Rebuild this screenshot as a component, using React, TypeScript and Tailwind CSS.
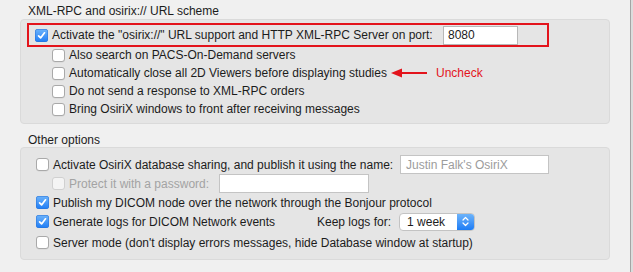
import React from "react";

const Check = ({
  checked = false,
  disabled = false,
}: {
  checked?: boolean;
  disabled?: boolean;
}) =>
  checked ? (
    <span className="flex h-[13px] w-[13px] shrink-0 items-center justify-center rounded-[3px] bg-gradient-to-b from-[#6cb3fa] to-[#1a7cf5] shadow-[inset_0_0_0_0.5px_#2a73d6]">
      <svg width="9" height="9" viewBox="0 0 9 9" fill="none">
        <path
          d="M1.6 4.8 L3.6 6.9 L7.5 1.8"
          stroke="white"
          strokeWidth="1.7"
          strokeLinecap="round"
          strokeLinejoin="round"
        />
      </svg>
    </span>
  ) : (
    <span
      className={
        disabled
          ? "h-[13px] w-[13px] shrink-0 rounded-[3px] border border-[#d0d0d0] bg-[#f4f4f4]"
          : "h-[13px] w-[13px] shrink-0 rounded-[3px] border border-[#a9a9a9] bg-white shadow-[0_0.5px_0.5px_rgba(0,0,0,0.08)]"
      }
    />
  );

const Row = ({
  indent = false,
  checked = false,
  disabled = false,
  children,
  className = "",
}: {
  indent?: boolean;
  checked?: boolean;
  disabled?: boolean;
  children: React.ReactNode;
  className?: string;
}) => (
  <div
    className={`flex shrink-0 items-center ${indent ? "pl-[31px]" : "pl-[15px]"} ${className}`}
  >
    <Check checked={checked} disabled={disabled} />
    <span
      className={`ml-[4px] whitespace-nowrap ${disabled ? "text-[#a3a3a3]" : ""}`}
    >
      {children}
    </span>
  </div>
);

export default function App() {
  return (
    <div className="flex h-[272px] w-[633px] overflow-hidden font-['Liberation_Sans',Arial,sans-serif] text-[12px] leading-[16px] text-[#1c1c1c]">
      <div className="flex w-[630px] flex-col bg-[#f0f0f0] px-[20px]">
        <div className="mt-[4px] h-[15px] pl-[8px] leading-[15px]">
          XML-RPC and osirix:// URL scheme
        </div>
        <div className="flex h-[105px] flex-col rounded-[4px] border border-[#dadada] bg-[#e5e5e5] pt-[3px]">
          <div className="ml-[6px] flex h-[24px] w-[522px] items-center border-2 border-[#e3141c] pl-[6px]">
            <Check checked />
            <span className="ml-[4px] whitespace-nowrap">
              Activate the "osirix://" URL support and HTTP XML-RPC Server on
              port:
            </span>
            <div className="ml-auto mr-[29px] flex h-[19px] w-[75px] items-center border border-[#b8b8b8] bg-white pl-[4px]">
              8080
            </div>
          </div>
          <div className="flex flex-col gap-[2px]">
            <Row indent className="h-[16px]">
              Also search on PACS-On-Demand servers
            </Row>
            <div className="flex h-[16px] items-center">
              <Row indent className="w-[370px]">
                Automatically close all 2D Viewers before displaying studies
              </Row>
              <svg width="38" height="10" viewBox="0 0 38 10">
                <path d="M0 5 L11 0.5 L11 9.5 Z" fill="#e3141c" />
                <rect x="10" y="4" width="26" height="2" fill="#e3141c" />
              </svg>
              <span className="ml-[7px] text-[#e3141c]">Uncheck</span>
            </div>
            <Row indent className="h-[16px]">
              Do not send a response to XML-RPC orders
            </Row>
            <Row indent className="h-[16px]">
              Bring OsiriX windows to front after receiving messages
            </Row>
          </div>
        </div>
        <div className="mt-[9px] h-[14px] pl-[8px] leading-[14px]">
          Other options
        </div>
        <div className="flex h-[113px] flex-col rounded-[4px] border border-[#dadada] bg-[#e5e5e5] pt-[7px]">
          <div className="flex h-[19px] items-center">
            <Row>Activate OsiriX database sharing, and publish it using the name:</Row>
            <div className="ml-auto mr-[60px] flex h-[19px] w-[149px] items-center border border-[#c4c4c4] bg-white pl-[5px] text-[#9c9c9c]">
              Justin Falk's OsiriX
            </div>
          </div>
          <div className="flex h-[19px] items-center">
            <Row indent disabled className="w-[198px]">
              Protect it with a password:
            </Row>
            <div className="h-[19px] w-[150px] border border-[#c4c4c4] bg-white" />
          </div>
          <Row checked className="h-[19px]">
            Publish my DICOM node over the network through the Bonjour protocol
          </Row>
          <div className="flex h-[19px] items-center">
            <Row checked className="w-[296px]">
              Generate logs for DICOM Network events
            </Row>
            <span className="whitespace-nowrap">Keep logs for:</span>
            <div className="ml-[8px] flex h-[18px] w-[76px] items-center overflow-hidden rounded-[4px] border border-[#c3c3c3] bg-white">
              <span className="flex-1 pl-[7px]">1 week</span>
              <span className="flex h-full w-[17px] items-center justify-center bg-gradient-to-b from-[#6cb3fa] to-[#1a7cf5]">
                <svg width="7" height="11" viewBox="0 0 7 11" fill="none">
                  <path
                    d="M1 4 L3.5 1.5 L6 4 M1 7 L3.5 9.5 L6 7"
                    stroke="white"
                    strokeWidth="1.2"
                    strokeLinecap="round"
                    strokeLinejoin="round"
                  />
                </svg>
              </span>
            </div>
          </div>
          <Row className="mt-[2px] h-[19px]">
            Server mode (don't display errors messages, hide Database window at
            startup)
          </Row>
        </div>
      </div>
      <div className="w-[1px] bg-[#a4a4a4]" />
      <div className="flex-1 bg-[#dcdcdc]" />
    </div>
  );
}
